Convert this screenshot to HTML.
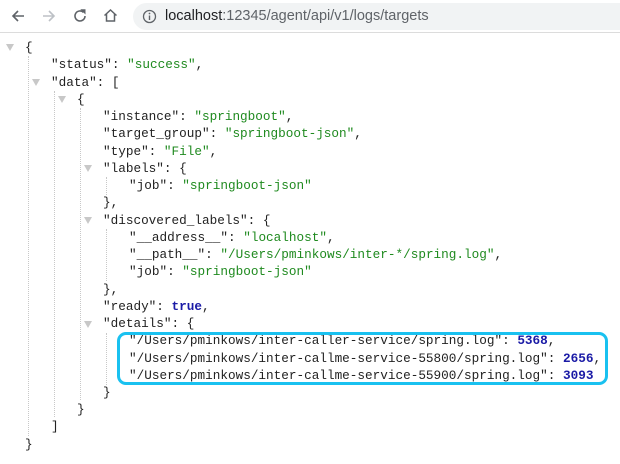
<!DOCTYPE html>
<html><head><style>
body{margin:0;width:620px;height:464px;background:#fff;overflow:hidden;position:relative;font-family:"Liberation Sans",sans-serif}
.bar{position:absolute;left:0;top:0;width:620px;height:32px;background:#fff;border-bottom:1px solid #dcdcdc}
.url{position:absolute;left:133px;top:3px;width:500px;height:27px;background:#f1f3f4;border-radius:14px}
.url span.t{position:absolute;left:32px;top:5px;font-size:14.5px;color:#5f6368;white-space:nowrap}
.url b{font-weight:normal;color:#202124}
.l{position:absolute;font-family:"Liberation Mono",monospace;font-size:12.7px;color:#222;white-space:pre;line-height:17px}
.s{color:#1f8a1f}.n{color:#1a1aa6;font-weight:bold}
.tri{position:absolute;width:0;height:0;border-left:4px solid transparent;border-right:4px solid transparent;border-top:7px solid #c8c8c8}
.g{position:absolute;width:0;border-left:1px dotted #c8c8c8}
.box{position:absolute;left:117px;top:332px;width:485px;height:47px;border:3px solid #19c1f0;border-radius:9px}
</style></head><body>
<div class="bar">
<svg style="position:absolute;left:10px;top:8px" width="16" height="16" viewBox="0 0 16 16"><path d="M14 8H3M8 3L3 8l5 5" fill="none" stroke="#5f6368" stroke-width="1.6"/></svg>
<svg style="position:absolute;left:41px;top:8px" width="16" height="16" viewBox="0 0 16 16"><path d="M2 8h11M8 3l5 5-5 5" fill="none" stroke="#bdc1c6" stroke-width="1.6"/></svg>
<svg style="position:absolute;left:72px;top:8px" width="16" height="16" viewBox="0 0 16 16"><path d="M13 8a5 5 0 1 1-1.5-3.6" fill="none" stroke="#5f6368" stroke-width="1.6"/><path d="M9.5 1.8h3.5v3.5z" fill="#5f6368" stroke="#5f6368"/></svg>
<svg style="position:absolute;left:102px;top:7px" width="17" height="17" viewBox="0 0 17 17"><path d="M2.5 8.5L8.5 3l6 5.5M4.5 7v7h8V7" fill="none" stroke="#5f6368" stroke-width="1.5"/></svg>
<div class="url"><svg style="position:absolute;left:9px;top:6px" width="15" height="15" viewBox="0 0 15 15"><circle cx="7.5" cy="7.5" r="6" fill="none" stroke="#5f6368" stroke-width="1.3"/><path d="M7.5 6.5v4.5" stroke="#5f6368" stroke-width="1.4"/><circle cx="7.5" cy="4.5" r=".9" fill="#5f6368"/></svg><span class="t"><b>localhost</b>:12345/agent/api/v1/logs/targets</span></div>
</div>

<div class="g" style="left:28px;top:56px;height:380px"></div>
<div class="g" style="left:54px;top:91px;height:326px"></div>
<div class="g" style="left:80px;top:108px;height:292px"></div>
<div class="g" style="left:106px;top:177px;height:18px"></div>
<div class="g" style="left:106px;top:229px;height:52px"></div>
<div class="g" style="left:106px;top:333px;height:52px"></div>

<div class="tri" style="left:6px;top:44px"></div>
<div class="tri" style="left:32px;top:79px"></div>
<div class="tri" style="left:58px;top:96px"></div>
<div class="tri" style="left:84px;top:165px"></div>
<div class="tri" style="left:84px;top:217px"></div>
<div class="tri" style="left:84px;top:321px"></div>

<div class="l" style="left:25px;top:39px">{</div>
<div class="l" style="left:51px;top:56px">"status": <span class="s">"success"</span>,</div>
<div class="l" style="left:51px;top:74px">"data": [</div>
<div class="l" style="left:77px;top:91px">{</div>
<div class="l" style="left:103px;top:108px">"instance": <span class="s">"springboot"</span>,</div>
<div class="l" style="left:103px;top:125px">"target_group": <span class="s">"springboot-json"</span>,</div>
<div class="l" style="left:103px;top:143px">"type": <span class="s">"File"</span>,</div>
<div class="l" style="left:103px;top:160px">"labels": {</div>
<div class="l" style="left:129px;top:177px">"job": <span class="s">"springboot-json"</span></div>
<div class="l" style="left:103px;top:194px">},</div>
<div class="l" style="left:103px;top:212px">"discovered_labels": {</div>
<div class="l" style="left:129px;top:229px">"__address__": <span class="s">"localhost"</span>,</div>
<div class="l" style="left:129px;top:246px">"__path__": <span class="s">"/Users/pminkows/inter-*/spring.log"</span>,</div>
<div class="l" style="left:129px;top:263px">"job": <span class="s">"springboot-json"</span></div>
<div class="l" style="left:103px;top:281px">},</div>
<div class="l" style="left:103px;top:298px">"ready": <span class="n">true</span>,</div>
<div class="l" style="left:103px;top:315px">"details": {</div>
<div class="l" style="left:129px;top:332px">"/Users/pminkows/inter-caller-service/spring.log": <span class="n">5368</span>,</div>
<div class="l" style="left:129px;top:350px">"/Users/pminkows/inter-callme-service-55800/spring.log": <span class="n">2656</span>,</div>
<div class="l" style="left:129px;top:367px">"/Users/pminkows/inter-callme-service-55900/spring.log": <span class="n">3093</span></div>
<div class="l" style="left:103px;top:384px">}</div>
<div class="l" style="left:77px;top:401px">}</div>
<div class="l" style="left:51px;top:418px">]</div>
<div class="l" style="left:25px;top:436px">}</div>
<div class="box"></div>
</body></html>
